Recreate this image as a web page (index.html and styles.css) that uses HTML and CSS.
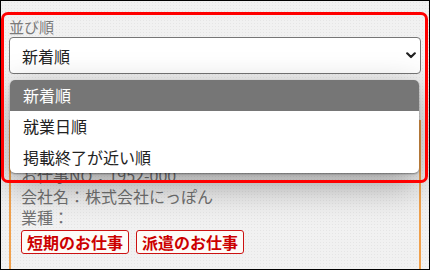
FILE: index.html
```html
<!DOCTYPE html>
<html lang="ja">
<head>
<meta charset="utf-8">
<title>並び順</title>
<link rel="stylesheet" href="styles.css">
</head>
<body>
<div class="frame">
  <div class="sort">
    <div class="sort-label">並び順</div>
    <div class="select-wrap">
      <div class="select">
        <span class="select-value">新着順</span>
        <svg class="chevron" width="10" height="7" viewBox="0 0 10 7"><path d="M1.2 1.3 L5 5 L8.8 1.3" fill="none" stroke="#222" stroke-width="2.2" stroke-linecap="round" stroke-linejoin="round"/></svg>
      </div>
      <ul class="menu">
        <li class="menu-item is-selected">新着順</li>
        <li class="menu-item">就業日順</li>
        <li class="menu-item">掲載終了が近い順</li>
      </ul>
    </div>
  </div>
  <div class="card">
    <div class="card-line">お仕事NO：1952-000</div>
    <div class="card-line">会社名：株式会社にっぽん</div>
    <div class="card-line">業種：</div>
    <div class="tags">
      <span class="tag">短期のお仕事</span>
      <span class="tag">派遣のお仕事</span>
    </div>
  </div>
  <div class="highlight"></div>
</div>
</body>
</html>
```

FILE: styles.css
```css
html, body {
  margin: 0;
  padding: 0;
}

body {
  font-family: "Noto Sans CJK JP", "Noto Sans", "Liberation Sans", sans-serif;
}

.frame {
  position: relative;
  width: 430px;
  height: 270px;
  box-sizing: border-box;
  border: 1px solid #000;
  overflow: hidden;
  padding: 17px 8px 0;
  background-color: #f1f1f1;
  background-image: radial-gradient(rgba(0, 0, 0, 0.05) 0.7px, transparent 1px);
  background-size: 3px 3px;
}

.sort-label {
  font-size: 15px;
  line-height: 18px;
  color: #7a7a7a;
  margin-bottom: 1px;
}

.select-wrap {
  position: relative;
}

.select {
  height: 37px;
  box-sizing: border-box;
  border: 1px solid #767676;
  border-radius: 4px;
  background: #fff;
  display: flex;
  align-items: center;
  justify-content: space-between;
  padding: 0 4px 0 12px;
  font-size: 16px;
  color: #222;
}

.chevron {
  display: block;
}

.menu {
  position: absolute;
  z-index: 2;
  top: calc(100% + 6px);
  left: 1px;
  right: 2px;
  margin: 0;
  padding: 0;
  list-style: none;
  background: #fff;
  border-radius: 5px;
  overflow: hidden;
  box-shadow: 0 1px 2px rgba(0, 0, 0, 0.4), 0 12px 36px rgba(0, 0, 0, 0.36);
}

.menu-item {
  height: 31px;
  line-height: 31px;
  padding-left: 13px;
  font-size: 16px;
  color: #222;
}

.menu-item.is-selected {
  background: #767676;
  color: #fff;
}

.card {
  margin-top: 46px;
  border-left: 2px solid #f0a04b;
  border-right: 2px solid #f0a04b;
  padding: 45px 10px 20px;
  color: #727272;
}

.card-line {
  font-size: 16px;
  line-height: 21px;
}

.tags {
  display: flex;
  gap: 7px;
  margin-top: 2px;
}

.tag {
  display: inline-block;
  border: 1px solid #cc1111;
  border-radius: 3px;
  background: #fdfbf7;
  color: #cc0000;
  font-weight: bold;
  font-size: 16px;
  line-height: 18px;
  padding: 2px 5px;
}

.highlight {
  position: absolute;
  z-index: 3;
  left: 0;
  top: 11px;
  width: 427px;
  height: 171px;
  box-sizing: border-box;
  border: 3px solid #ff0000;
  border-radius: 7px;
  pointer-events: none;
}
```
